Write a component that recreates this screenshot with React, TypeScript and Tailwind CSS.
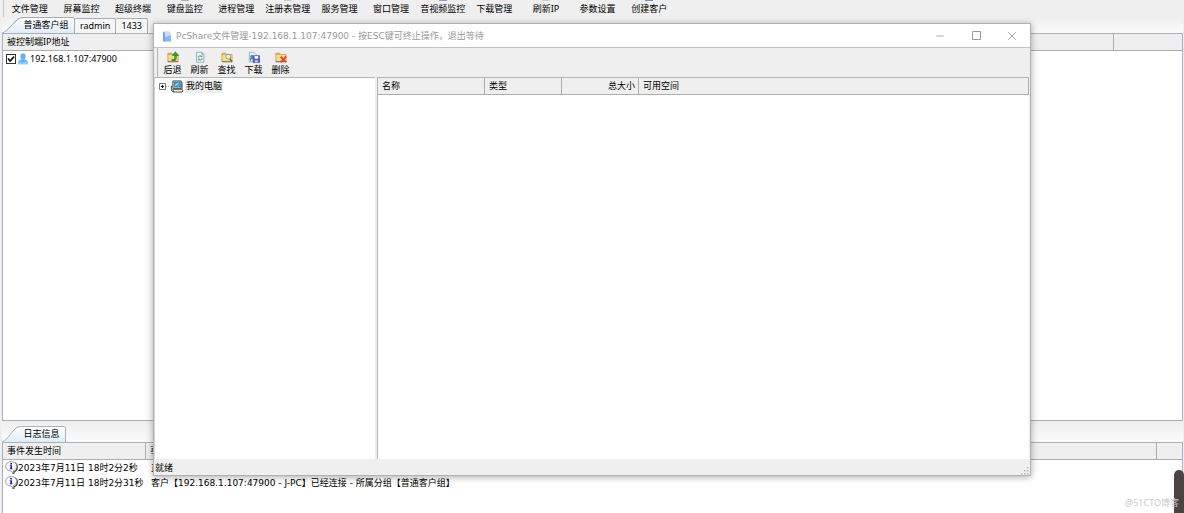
import { Minus, Square, X } from "lucide-react";
import { twMerge } from "tailwind-merge";
import type { ReactNode } from "react";

const menuItems = [
  { label: "文件管理", hint: "" },
  { label: "屏幕监控", hint: "" },
  { label: "超级终端", hint: "" },
  { label: "键盘监控", hint: "bg-[#b0b0b0]" },
  { label: "进程管理", hint: "" },
  { label: "注册表管理", hint: "bg-[#c9c9c9]" },
  { label: "服务管理", hint: "" },
  { label: "窗口管理", hint: "" },
  { label: "音视频监控", hint: "bg-[#9a8fe8]" },
  { label: "下载管理", hint: "" },
  { label: "刷新IP", hint: "bg-[#c5ccd0]" },
  { label: "参数设置", hint: "" },
  { label: "创建客户", hint: "bg-[#7d96a6]" },
];

const logs = [
  { time: "2023年7月11日 18时2分2秒", text: "正" },
  {
    time: "2023年7月11日 18时2分31秒",
    text: "客户【192.168.1.107:47900 - J-PC】已经连接 - 所属分组【普通客户组】",
  },
];

const Folder = () => (
  <>
    <path d="M1 2.500h4.500l1 1.500H13v8.500H1z" fill="#e0b04a" stroke="#a98a4a" strokeWidth=".6" />
    <path d="M1.500 4.800h11l-.3 7.400H1.800z" fill="#f7dc8c" />
    <path d="M1 12.500h12" stroke="#6b5a35" strokeWidth=".9" />
  </>
);

const BackIcon = () => (
  <svg viewBox="0 0 14 14" className="size-[14px]">
    <Folder />
    <path d="M5.500 10.500h2c2 0 2.500-1 2.500-3V5" fill="none" stroke="#1c7a22" strokeWidth="2.400" />
    <path d="M5.500 10.300h2c1.800 0 2.400-1 2.400-2.800V4.500" fill="none" stroke="#3fae3c" strokeWidth="1.300" />
    <path d="M9.800.8 6.200 5.200h7.200z" fill="#35a435" stroke="#1c7a22" strokeWidth=".7" />
  </svg>
);

const RefreshIcon = () => (
  <svg viewBox="0 0 14 14" className="size-[14px]">
    <path d="M3 1.500h6L11.500 4v9H3z" fill="#f3f9ff" stroke="#7d93b8" strokeWidth=".9" />
    <path d="M9 1.500V4h2.500z" fill="#5c7db5" />
    <path d="M5 7.500c.2-1.800 2-2.500 3.400-1.400M9.500 8.500c-.2 1.800-2 2.500-3.400 1.400" fill="none" stroke="#5aa83a" strokeWidth="1.300" />
    <path d="m7.700 7 2.200.2-.3-2.600zM6.800 9l-2.200-.2.3 2.600z" fill="#4e9b30" />
  </svg>
);

const FindIcon = () => (
  <svg viewBox="0 0 14 14" className="size-[14px]">
    <Folder />
    <path d="m10.200 9 2.800 3.500" stroke="#a0602a" strokeWidth="1.800" />
    <circle cx="8.500" cy="6.500" r="2.800" fill="#dff0ff" stroke="#8a93a0" />
  </svg>
);

const DownloadIcon = () => (
  <svg viewBox="0 0 14 14" className="size-[14px]">
    <path d="M1.500 1.500h5.500L9.500 4v8.500h-8z" fill="#e7f3ff" stroke="#8ba3c8" strokeWidth=".9" />
    <circle cx="4.500" cy="6.500" r="2" fill="#4fa070" />
    <path d="M3 11.500V9h3" fill="none" stroke="#3c8ad5" strokeWidth="1.400" />
    <path d="M6 5.500h7.500v8H6z" fill="#5560b8" stroke="#3a4593" strokeWidth=".7" />
    <path d="M7.600 5.800h4.300v3.200H7.600z" fill="#f2f4ff" />
    <path d="M8 10.800h3.500v2.500H8z" fill="#c4cbef" />
  </svg>
);

const DeleteIcon = () => (
  <svg viewBox="0 0 14 14" className="size-[14px]">
    <Folder />
    <path d="m6.500 6.500 6.500 6.500M13 6.200l-6.500 7" stroke="#ea3c22" strokeWidth="2" />
  </svg>
);

const tools = [
  { label: "后退", icon: <BackIcon /> },
  { label: "刷新", icon: <RefreshIcon /> },
  { label: "查找", icon: <FindIcon /> },
  { label: "下载", icon: <DownloadIcon /> },
  { label: "删除", icon: <DeleteIcon /> },
];

const UserIcon = () => (
  <svg viewBox="0 0 12 12" className="size-3">
    <defs>
      <linearGradient id="user" x1="0" y1="0" x2="0" y2="1">
        <stop offset="0" stopColor="#55adf5" />
        <stop offset="1" stopColor="#9ed8ff" />
      </linearGradient>
    </defs>
    <path d="M.8 11.5c0-3 1-4.600 3.500-5h3.400c2.500.4 3.500 2 3.500 5z" fill="url(#user)" />
    <ellipse cx="6" cy="3.500" rx="2.600" ry="3.200" fill="#63b2f5" />
    <path d="M4.800 7h2.400L6 9.600z" fill="#4a9fee" />
  </svg>
);

const InfoIcon = () => (
  <svg viewBox="0 0 13 13" className="size-[13px] shrink-0">
    <path d="M7.500 11.600 8.800 13l.2-2.200C13.600 9.200 13 3.500 10 1.800" fill="none" stroke="#444" strokeWidth="1.300" />
    <path d="M6.200.6c3.200 0 5.400 2 5.400 4.700 0 2.200-1.400 3.900-3.500 4.500l.2 2.500-2.500-2.300C2.800 9.900.7 8 .7 5.300.7 2.600 3 .6 6.200.6z" fill="#fff" stroke="#888" strokeWidth=".8" />
    <path d="M5.300 2h1.700v1.400H5.300zM4.700 4.200H7v3.200h.7v.9H4.600v-.9h.8V5.100h-.7z" fill="#1414e6" />
  </svg>
);

const AppIcon = () => (
  <svg viewBox="0 0 10 12" className="h-3 w-[10px]">
    <path d="m1 1.500 5.500-.5L9 3v8.500H1z" fill="#c9dff8" />
    <path d="M1 1.500 3 3v8.500H1z" fill="#6aa4ea" />
    <path d="m3 7 6-2v6.500H3z" fill="#8ab8f0" />
  </svg>
);

const ComputerIcon = () => (
  <svg viewBox="0 0 14 14" className="h-[13px] w-[14px]">
    <path d="M2.500 1h9v8h-9z" fill="#e4e0d8" stroke="#333" strokeWidth=".9" />
    <path d="M4 2.400h6.400v5H4z" fill="#35b8f0" stroke="#1c5cb0" strokeWidth=".8" />
    <path d="m4.600 6.400 4-3.200" stroke="#b4f0ff" />
    <path d="M12 1.500 13 3v7l-1 .5z" fill="#555" />
    <path d="M2.500 10h10l.8 1.500-.8 1.500h-9z" fill="#eee" stroke="#333" strokeWidth=".9" />
    <path d="M1 6v5.500l2.500 1.700" fill="none" stroke="#444" />
  </svg>
);

const SlantedTab = ({ children, className }: { children: ReactNode; className?: string }) => (
  <button type="button" className={twMerge("relative h-4 pl-[15px] text-center", className)}>
    <svg viewBox="0 0 72 16" preserveAspectRatio="none" className="absolute inset-0 size-full">
      <defs>
        <linearGradient id="tab" x1="0" y1="0" x2="0" y2="1">
          <stop offset="0" stopColor="#fff" />
          <stop offset="1" stopColor="#dfedf9" />
        </linearGradient>
      </defs>
      <path d="M0 16C7 14 12 3 18 1q1-.5 3-.5h49q1.500 0 1.500 1.500v14" fill="url(#tab)" stroke="#a5acb3" />
    </svg>
    <span className="relative">{children}</span>
  </button>
);

const FlatTab = ({ children }: { children: ReactNode }) => (
  <button type="button" className="h-[15px] rounded-t-xs border-t border-r border-[#a5acb3] bg-[#f6f6f6] px-[5px]">
    {children}
  </button>
);

const Th = ({ children, className }: { children?: ReactNode; className?: string }) => (
  <th
    className={twMerge(
      "h-[17px] overflow-hidden border-r border-b border-[#adadad] bg-[#efefef] p-0 pl-1 text-left font-normal whitespace-nowrap",
      className
    )}
  >
    {children}
  </th>
);

const FileManager = () => (
  <section
    aria-label="PcShare文件管理"
    className="absolute top-[23px] right-[153px] bottom-[37px] left-[153px] flex flex-col border border-[#b0b0b0] bg-[#efefef] shadow-[0_1px_7px_rgba(0,0,0,0.35)]"
  >
    <header className="flex h-6 shrink-0 items-center border-b border-[#c4c4c4] bg-white pl-2 text-[#999]">
      <AppIcon />
      <h1 className="ml-1 flex-1 font-['DejaVu_Sans','Noto_Sans_CJK_SC',sans-serif] whitespace-nowrap">
        PcShare文件管理-192.168.1.107:47900 - 按ESC键可终止操作，退出等待
      </h1>
      <button type="button" aria-label="最小化" className="grid h-full w-9 place-items-center">
        <Minus className="size-3" strokeWidth={1.5} />
      </button>
      <button type="button" aria-label="最大化" className="grid h-full w-9 place-items-center">
        <svg viewBox="0 0 9 9" className="size-[9px]" fill="none" stroke="currentColor">
          <path d="M.5.5h8v8h-8z" />
        </svg>
      </button>
      <button type="button" aria-label="关闭" className="grid h-full w-9 place-items-center">
        <X className="size-[14px]" strokeWidth={1.5} />
      </button>
    </header>

    <div className="ml-[3px] flex h-[29px] shrink-0 border-l border-[#b5b5b5] pt-[3px] pl-px">
      {tools.map((tool) => (
        <button key={tool.label} type="button" className="flex w-[27px] flex-col items-center whitespace-nowrap">
          {tool.icon}
          <span className="leading-[14px]">{tool.label}</span>
        </button>
      ))}
    </div>

    <div className="mr-px flex min-h-0 flex-1 gap-[2px]">
      <aside className="w-[221px] shrink-0 border-t border-l border-t-[#b5b5b5] border-l-[#d5d5d5] bg-white pl-[3px]">
        <button type="button" className="flex h-4 items-center">
          <svg viewBox="0 0 12 9" className="h-[9px] w-3">
            <path d="M1.500 1.500h6v6h-6z" fill="#fff" stroke="#777" />
            <path d="M3 4.500h3M4.500 3v3" stroke="#111" />
            <path d="M8 4.500h4" stroke="#aaa" strokeDasharray="1 1" />
          </svg>
          <ComputerIcon />
          <span className="ml-px bg-[#efefef] px-px leading-[14px]">我的电脑</span>
        </button>
      </aside>
      <div className="min-w-0 flex-1 border-t border-l border-[#b5b5b5] bg-white">
        <table className="w-full table-fixed border-separate border-spacing-0">
          <thead>
            <tr>
              <Th className="w-[107px]">名称</Th>
              <Th className="w-[77px]">类型</Th>
              <Th className="w-[77px] pr-[3px] text-right">总大小</Th>
              <Th>可用空间</Th>
            </tr>
          </thead>
        </table>
      </div>
    </div>

    <footer className="flex h-4 shrink-0 items-end justify-between pl-px">
      <span className="leading-[14px]">就绪</span>
      <svg viewBox="0 0 8 8" className="mr-px size-2" fill="#b5b5b5">
        <path d="M6 0h1.500v1.500H6zM3 3h1.500v1.500H3zM6 3h1.500v1.500H6zM0 6h1.500v1.500H0zM3 6h1.500v1.500H3zM6 6h1.500v1.500H6z" />
      </svg>
    </footer>
  </section>
);

export default function App() {
  return (
    <div className="relative flex h-screen flex-col overflow-hidden bg-[#efefef] font-['Noto_Sans','Noto_Sans_CJK_SC',sans-serif] text-[9px] leading-3 text-black">
      <nav className="ml-[3px] flex h-[17px] shrink-0 border-l border-[#c4c4c4]">
        <div className="grid w-[671px] grid-cols-13">
          {menuItems.map((item) => (
            <button key={item.label} type="button" className="flex flex-col items-center whitespace-nowrap">
              <span className={twMerge("h-px w-2", item.hint)} />
              <span className="pt-[2px]">{item.label}</span>
            </button>
          ))}
        </div>
      </nav>

      <main className="flex min-h-0 flex-1 flex-col pr-px pl-[2px]">
        <div className="flex h-4 shrink-0 items-end bg-linear-to-b from-[#efefef] to-[#fbfbfb]">
          <SlantedTab className="w-[73px]">普通客户组</SlantedTab>
          <FlatTab>radmin</FlatTab>
          <FlatTab>1433</FlatTab>
        </div>
        <div className="min-h-0 flex-1 border border-[#a5b1bc] bg-white">
          <table className="w-full table-fixed border-separate border-spacing-0">
            <thead>
              <tr>
                <Th>被控制端IP地址</Th>
                <Th className="w-[68px] border-r-0" />
              </tr>
            </thead>
            <tbody>
              <tr>
                <td className="h-4 p-0 pl-[3px]">
                  <label className="flex items-center">
                    <span className="grid size-[10px] place-items-center">
                      <input
                        type="checkbox"
                        defaultChecked
                        className="peer col-start-1 row-start-1 size-[10px] appearance-none border border-[#333] bg-white"
                      />
                      <svg viewBox="0 0 8 8" className="invisible col-start-1 row-start-1 size-2 peer-checked:visible">
                        <path d="M1 3.500 3.200 6 7 1.600" fill="none" stroke="#111" strokeWidth="1.700" />
                      </svg>
                    </span>
                    <span className="mx-px">
                      <UserIcon />
                    </span>
                    192.168.1.107:47900
                  </label>
                </td>
                <td />
              </tr>
            </tbody>
          </table>
        </div>

        <div className="flex h-[21px] shrink-0 items-end bg-linear-to-b from-[#efefef] to-[#fbfbfb]">
          <SlantedTab className="w-16">日志信息</SlantedTab>
        </div>
        <div className="h-[71px] shrink-0 border border-b-0 border-[#a5b1bc] bg-white">
          <table className="w-full table-fixed border-separate border-spacing-0">
            <thead>
              <tr>
                <Th className="w-[143px]">事件发生时间</Th>
                <Th>事件</Th>
                <Th className="w-[25px] border-r-0" />
              </tr>
            </thead>
            <tbody className="font-['DejaVu_Sans','Noto_Sans_CJK_SC',sans-serif]">
              {logs.map((log) => (
                <tr key={log.time}>
                  <td className="h-[15px] p-0 pl-[2px] whitespace-nowrap">
                    <span className="flex h-[15px] items-center">
                      <InfoIcon />
                      {log.time}
                    </span>
                  </td>
                  <td className="h-[15px] p-0 pl-[5px] whitespace-nowrap">{log.text}</td>
                  <td />
                </tr>
              ))}
            </tbody>
          </table>
        </div>
      </main>

      <FileManager />

      <div className="absolute right-0 bottom-0 h-[43px] w-[10px] rounded-t-full bg-[#4b4443]" />
      <p className="absolute right-[5px] bottom-1 text-[#c8c8c8]">@51CTO博客</p>
    </div>
  );
}
